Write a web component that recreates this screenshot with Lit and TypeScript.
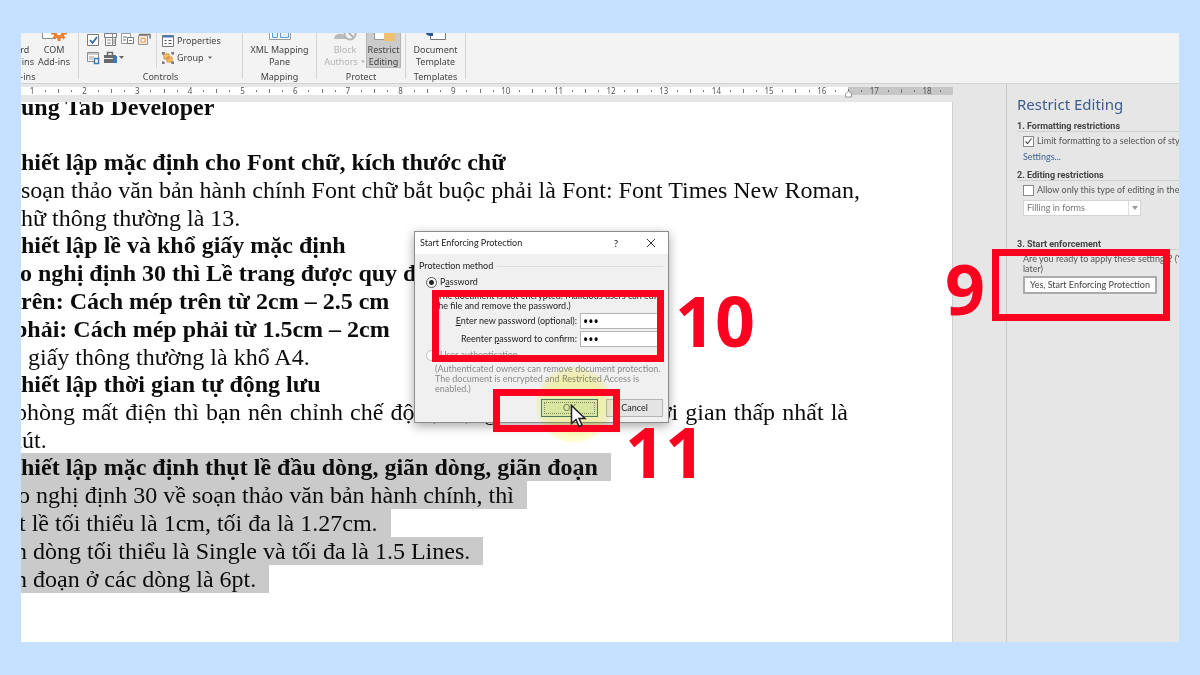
import { LitElement, html, css, svg, nothing } from "lit";
import { customElement } from "lit/decorators.js";
import { classMap } from "lit/directives/class-map.js";
import { styleMap } from "lit/directives/style-map.js";

interface Line {
  text: string;
  kind?: "heading" | "bold" | "justify";
  hang?: number;
  selected?: boolean;
}

const LINES: Line[] = [
  { text: "ung Tab Developer", kind: "bold" },
  { text: "" },
  { text: "hiết lập mặc định cho Font chữ, kích thước chữ", kind: "heading" },
  { text: "soạn thảo văn bản hành chính Font chữ bắt buộc phải là Font: Font Times New Roman,", kind: "justify" },
  { text: "hữ thông thường là 13." },
  { text: "hiết lập lề và khổ giấy mặc định", kind: "heading" },
  { text: "o nghị định 30 thì Lề trang được quy định", kind: "bold", hang: 1 },
  { text: "rên: Cách mép trên từ 2cm – 2.5 cm", kind: "bold" },
  { text: "phải: Cách mép phải từ 1.5cm – 2cm", kind: "bold", hang: 7 },
  { text: "ổ giấy thông thường là khổ A4.", hang: 11 },
  { text: "hiết lập thời gian tự động lưu", kind: "heading" },
  { text: "phòng mất điện thì bạn nên chỉnh chế độ tự động lưu Word với thời gian thấp nhất là", kind: "justify", hang: 6 },
  { text: "hút.", hang: 11 },
  { text: "hiết lập mặc định thụt lề đầu dòng, giãn dòng, giãn đoạn", kind: "heading", selected: true },
  { text: "o nghị định 30 về soạn thảo văn bản hành chính, thì", hang: 3, selected: true },
  { text: "t lề tối thiểu là 1cm, tối đa là 1.27cm.", hang: 2, selected: true },
  { text: "n dòng tối thiểu là Single và tối đa là 1.5 Lines.", hang: 6, selected: true },
  { text: "n đoạn ở các dòng là 6pt.", hang: 6, selected: true },
];

const base = css`
  * { box-sizing: border-box; }
  button, input, select { font: inherit; color: inherit; margin: 0; }
  button { padding: 0; border: 0; background: none; }
  svg { display: block; flex: none; }
`;

@customElement("word-ribbon")
class WordRibbon extends LitElement {
  static styles = [base, css`
    :host { display: flex; height: 51px; overflow: hidden; background: #f3f3f3; border-bottom: 1px solid #d2d2d2;
      font: 9px/12px "Noto Sans", "Open Sans", sans-serif; color: #444; white-space: nowrap; }
    .group { display: flex; flex-direction: column; justify-content: flex-end; flex: none; height: 46px;
      border-right: 1px solid #d4d4d4; }
    .label { line-height: 12px; margin-bottom: -4px; text-align: center; }
    .row { display: flex; justify-content: center; align-items: flex-end; height: 68px; margin-bottom: 3px; }
    .addins { width: 118px; margin-left: -60px; }
    .addins .row { justify-content: flex-end; padding-right: 6px; }
    .controls { width: 164px; }
    .controls .row { justify-content: flex-start; align-items: flex-end; padding-left: 8px; }
    .mapping { width: 74px; }
    .protect { width: 89px; }
    .protect .row { justify-content: flex-end; padding-right: 4px; }
    .templates { width: 60px; }
    .big { display: flex; flex-direction: column; align-items: center; width: 36px; }
    .big svg { margin-bottom: 2px; }
    .wide { width: 42px; }
    .restrict { width: 35px; background: #cbcbcb; box-shadow: inset 0 0 0 1px #b4b4b4; }
    .off { color: #b4b4b4; }
    .authors { display: flex; align-items: center; gap: 2px; }
    .big .authors svg { margin: 0; }
    .tools { display: grid; grid-template-columns: repeat(4, 17px); row-gap: 4px; width: 70px; padding-bottom: 3px;
      border-right: 1px solid #d9d9d9; }
    .tools button { height: 14px; }
    .side { display: flex; flex-direction: column; gap: 5px; padding: 0 0 4px 5px; }
    .side button { display: flex; align-items: center; gap: 3px; }
  `];

  caret(color = "#666") {
    return html`<svg width="6" height="4" viewBox="0 0 6 4"><path d="M1 .5h4L3 3z" fill=${color} /></svg>`;
  }

  render() {
    return html`
      <div class="group addins">
        <div class="row">
          <button class="big"><span>Word</span><span>Add-ins</span></button>
          <button class="big">
            <svg width="30" height="24" viewBox="0 0 30 24">
              <path d="M3.500 2.500h13v18h-13z" fill="#fff" stroke="#8a8a8a" />
              <path d="M6 8h8M6 12h8" stroke="#bbb" />
              <g fill="none" stroke="#ed8033">
                <circle cx="20" cy="15" r="4" stroke-width="3.500" />
                <path d="M20 8v3M20 20v3M12 15h3M25 15h3M14.500 9.500l2 2M23.500 18.500l2 2M25.500 9.500l-2 2M16.500 18.500l-2 2" stroke-width="3" />
              </g>
            </svg>
            <span>COM</span><span>Add-ins</span>
          </button>
        </div>
        <div class="label">Add-ins</div>
      </div>

      <div class="group controls">
        <div class="row">
          <div class="tools">
            <button aria-label="Check box content control"><svg width="14" height="14" viewBox="0 0 14 14">
              <path d="M.5 1.500h11v11H.5z" fill="#fff" stroke="#7a7a7a" /><path d="M3 7l2.500 3L10 4" fill="none" stroke="#2f6eb5" stroke-width="1.800" /></svg></button>
            <button aria-label="Combo box content control"><svg width="14" height="14" viewBox="0 0 14 14">
              <path d="M.5.5h12v4H.5zM1.500 4.500h10v8h-10z" fill="#fff" stroke="#7a7a7a" /><path d="M8.500 1v12M3 7h4M3 10h4M10 6v5" stroke="#8a8a8a" /></svg></button>
            <button aria-label="Drop-down list content control"><svg width="14" height="14" viewBox="0 0 14 14">
              <path d="M.5.5h9v10h-9z" fill="#fff" stroke="#999" /><path d="M6.500 4.500h6v6h-6zM2 4h4M2 7h3" fill="#fff" stroke="#777" /><path d="M8 7.500h3" stroke="#777" /></svg></button>
            <button aria-label="Date picker content control"><svg width="14" height="14" viewBox="0 0 14 14">
              <path d="M.5 2.500h9v9h-9z" fill="#f7e4d2" stroke="#999" /><path d="M3 5.500h4v3.500H3z" fill="#fff" stroke="#e0965a" /><path d="M1 1.500h11v4" fill="none" stroke="#777" stroke-width="1.500" /></svg></button>
            <button aria-label="Repeating section content control"><svg width="14" height="14" viewBox="0 0 14 14">
              <path d="M.5 1.500h11v9H.5z" fill="#fff" stroke="#8a8a8a" /><path d="M0 3h12M2 6h5M2 8h4" stroke="#999" /><path d="M7.500 7.500h4v5h-4z" fill="#fff" stroke="#3f78b8" stroke-width="1.500" /></svg></button>
            <button aria-label="Legacy tools"><svg width="22" height="14" viewBox="0 0 22 14">
              <path d="M0 4h12v8H0z" fill="#696969" /><path d="M3.500 4V1.500h5V4" fill="none" stroke="#696969" stroke-width="1.500" />
              <path d="M0 7.500h9" stroke="#eee" /><path d="M10 5h3v7h-3z" fill="#3f78b8" /><path d="M15 5h5l-2.500 3z" fill="#666" /></svg></button>
          </div>
          <div class="side">
            <button><svg width="12" height="12" viewBox="0 0 12 12">
              <path d="M.5.5h11v11H.5z" fill="#fff" stroke="#777" /><path d="M1 1.500h10" stroke="#3f78b8" stroke-width="2" /><path d="M2.500 5.500h2M2.500 8.500h2M6.500 5.500h3M6.500 8.500h3" stroke="#555" /></svg>Properties</button>
            <button><svg width="12" height="12" viewBox="0 0 12 12">
              <path d="M2 2h5v5H2zM5 5h5v5H5z" fill="#f2c078" stroke="#d99234" /><path d="M0 1h3M9 1h3M0 11h3M9 11h3M1 0v3M11 0v3M1 9v3M11 9v3" stroke="#555" /></svg>Group${this.caret()}</button>
          </div>
        </div>
        <div class="label">Controls</div>
      </div>

      <div class="group mapping">
        <div class="row">
          <button class="big"><svg width="24" height="24" viewBox="0 0 24 24">
            <path d="M1.500 3.500h21v18h-21z" fill="#fff" stroke="#999" /><path d="M4.500 14.500h5v5h-5zM12.500 14.500h8v5h-8zM8.500 7.500h6v4h-6z" fill="#e4effa" stroke="#5b9bd5" /></svg>
            <span>XML Mapping</span><span>Pane</span></button>
        </div>
        <div class="label">Mapping</div>
      </div>

      <div class="group protect">
        <div class="row">
          <button class="big wide off"><svg width="26" height="24" viewBox="0 0 26 24">
            <circle cx="8" cy="11" r="4" fill="#bbb" /><path d="M2 21c0-7 12-7 12 0z" fill="#bbb" />
            <circle cx="18" cy="16" r="5.500" fill="#f3f3f3" stroke="#b4b4b4" stroke-width="2" /><path d="M14 12l8 8" stroke="#b4b4b4" stroke-width="2" /></svg>
            <span>Block</span><span class="authors">Authors${this.caret("#b4b4b4")}</span></button>
          <button class="big restrict"><svg width="24" height="24" viewBox="0 0 24 24">
            <path d="M2.500 1.500h14v20h-14z" fill="#fff" stroke="#999" /><path d="M12 14h11v9H12z" fill="#f0c071" /><path d="M14.500 14v-3a3 3 0 0 1 6 0v3" fill="none" stroke="#777" stroke-width="1.500" /></svg>
            <span>Restrict</span><span>Editing</span></button>
        </div>
        <div class="label">Protect</div>
      </div>

      <div class="group templates">
        <div class="row">
          <button class="big wide"><svg width="24" height="24" viewBox="0 0 24 24">
            <path d="M6.500 2.500h15v19h-15z" fill="#fff" stroke="#777" /><path d="M2 8h12v10H7c-3 0-5-1-5-3z" fill="#2b579a" /><path d="M9 14h9v4H9z" fill="#fff" /></svg>
            <span>Document</span><span>Template</span></button>
        </div>
        <div class="label">Templates</div>
      </div>
    `;
  }
}

@customElement("word-document")
class WordDocument extends LitElement {
  static styles = [base, css`
    :host { display: flex; flex-direction: column; gap: 7px; padding: 3px 53px 0 0; min-width: 0; overflow: hidden; }
    .ruler { width: 100%; height: 8px; overflow: visible; background: #c6c6c6; flex: none;
      font: 8px "Noto Sans", sans-serif; fill: #555; }
    .page { flex: 1; min-height: 0; overflow: hidden; background: #fff; border-right: 1px solid #d0d0d0; }
    .text { width: 827px; margin-top: -9px; font: 24px/28px "Liberation Serif", serif; color: #0c0c0c; white-space: nowrap; }
    .line { height: 28px; }
    .bold, .heading { font-weight: 700; }
    .heading { height: 27px; line-height: 27px; }
    .justify { text-align: justify; text-align-last: justify; }
    .selected { width: fit-content; padding-right: 13px; background: #cacaca; }
    .selected.heading { height: 28px; margin-top: -1px; line-height: 28px; }
  `];

  ruler() {
    const cm = 895 / 17;
    const marks = [];
    for (let i = 0; i < 18; i++) {
      const x = 11 + cm * i;
      marks.push(svg`<text x=${x} y="7" text-anchor="middle">${i + 1}</text>`);
      for (let q = 1; q < 4 && !(i === 17 && q > 1); q++) {
        const h = q === 2 ? 4 : 2;
        marks.push(svg`<rect x=${Math.round(x + (cm * q) / 4)} y=${4 - h / 2} width="1" height=${h} fill="#777" />`);
      }
    }
    return html`<svg class="ruler" aria-label="Ruler">
      <rect width="827" height="8" fill="#fff" />
      ${marks}
      <path d="M827.500 4l3 3v3h-6V7z" fill="#fff" stroke="#999" />
    </svg>`;
  }

  render() {
    return html`${this.ruler()}
      <div class="page">
        <div class="text">
          ${LINES.map((l) => html`<div
            class=${classMap({ line: true, [l.kind ?? "plain"]: true, selected: !!l.selected })}
            style=${l.hang ? styleMap({ marginLeft: `-${l.hang}px` }) : nothing}>${l.text}</div>`)}
        </div>
      </div>`;
  }
}

@customElement("restrict-pane")
class RestrictPane extends LitElement {
  static styles = [base, css`
    :host { display: block; width: 173px; padding: 9px 0 0 10px; overflow: hidden; border-left: 1px solid #c8c8c8;
      font: 9px/10px Lato, "Open Sans", sans-serif; color: #555; white-space: nowrap; }
    h1 { margin: 0; font-family: "Noto Sans", sans-serif; font-size: 15px; line-height: 22px; font-weight: 400; color: #3f5b8c; }
    h2 { margin: 0; height: 12px; font-family: Roboto, sans-serif; font-size: 9px; line-height: 12px; font-weight: 700; color: #444; border-bottom: 1px solid #d0d0d0; }
    section { margin-top: 5px; padding-bottom: 2px; }
    .body { padding: 3px 0 0 6px; }
    .check { display: flex; align-items: center; gap: 3px; height: 12px; }
    .check input { appearance: none; width: 11px; height: 11px; flex: none; border: 1px solid #8a8a8a; background: #fff; }
    .check input:checked { background: #fff url("data:image/svg+xml,%3Csvg xmlns='http://www.w3.org/2000/svg' viewBox='0 0 9 9'%3E%3Cpath d='M1.500 4.500l2 2 4-5' fill='none' stroke='%23555' stroke-width='1.200'/%3E%3C/svg%3E"); }
    a { display: block; margin-top: 5px; color: #3f5f95; text-decoration: none; }
    .pick { position: relative; width: 118px; margin-top: 4px; }
    select { display: block; appearance: none; width: 100%; height: 16px; padding: 0 3px; border: 1px solid #d4d4d4; border-radius: 0; background: #fff; color: #777; opacity: 1; }
    .arrow { position: absolute; right: 0; top: 0; pointer-events: none; }
    .enforce { margin-top: 20px; }
    .enforce .body { padding-top: 4px; }
    .go { display: block; width: 134px; height: 18px; margin-top: 2px; border: 2px solid #ababab; background: #fdfdfd; color: #444; }
  `];

  render() {
    return html`
      <h1>Restrict Editing</h1>
      <section>
        <h2>1. Formatting restrictions</h2>
        <div class="body">
          <label class="check"><input type="checkbox" checked />Limit formatting to a selection of styles</label>
          <a href="#settings">Settings...</a>
        </div>
      </section>
      <section class="editing">
        <h2>2. Editing restrictions</h2>
        <div class="body">
          <label class="check"><input type="checkbox" />Allow only this type of editing in the document:</label>
          <div class="pick">
            <select disabled aria-label="Type of editing"><option>Filling in forms</option></select>
            <svg class="arrow" width="13" height="16"><path d="M.5 1v14" stroke="#ddd" /><path d="M4 6h6l-3 4z" fill="#999" /></svg>
          </div>
        </div>
      </section>
      <section class="enforce">
        <h2>3. Start enforcement</h2>
        <div class="body">
          <div>Are you ready to apply these settings? (You can</div>
          <div>later)</div>
          <button class="go">Yes, Start Enforcing Protection</button>
        </div>
      </section>`;
  }
}

@customElement("enforce-dialog")
class EnforceDialog extends LitElement {
  static styles = [base, css`
    :host { display: block; width: 255px; background: #f0f0f0; border: 1px solid #8c8c8c;
      box-shadow: 0 3px 10px rgba(0, 0, 0, .35); font: 9px/10px Lato, "Open Sans", sans-serif; color: #222; white-space: nowrap; }
    header { display: flex; align-items: center; height: 22px; padding: 0 12px 0 5px; background: #fff; }
    header span { flex: 1; }
    .help { width: 12px; margin-right: 24px; font-size: 10px; }
    form { padding: 7px 5px 5px 4px; }
    fieldset { margin: 0; padding: 0; border: 0; min-width: 0; }
    legend { display: flex; align-items: center; gap: 4px; width: 100%; height: 10px; padding: 0; }
    legend::after { content: ""; flex: 1; border-top: 1px solid #dcdcdc; }
    .radio { display: flex; align-items: center; gap: 3px; height: 12px; margin: 5px 0 0 7px; }
    .radio input { appearance: none; width: 11px; height: 11px; border: 1px solid #555; border-radius: 50%; background: #fff; }
    .radio input:checked { background: radial-gradient(circle, #222 0 2px, #fff 3px); }
    .off { color: #8a8a8a; }
    .off input { border-color: #bbb; }
    .radio.off { margin-top: 2px; }
    .note { margin: 3px 0 0 16px; }
    .fields { display: grid; grid-template-columns: 1fr 83px; gap: 2px 3px; margin-top: 2px; align-items: center; text-align: right; }
    .fields input { width: 100%; height: 16px; padding: 0 2px; border: 1px solid #b4b4b4; background: #fff; font: 14px/14px "Noto Sans", sans-serif; color: #000; }
    footer { display: flex; justify-content: flex-end; gap: 8px; margin-top: 5px; }
    footer button { width: 57px; height: 18px; background: #e4e4e4; border: 1px solid #b4b4b4; }
    footer .ok { border: 1px solid #4a7a78; outline: 1px dotted #888; outline-offset: -4px; background: #d9e8dc; color: #777; }
  `];

  render() {
    return html`
      <header>
        <span>Start Enforcing Protection</span>
        <button class="help" aria-label="Help">?</button>
        <button aria-label="Close"><svg width="10" height="10"><path d="M1 1l8 8M9 1l-8 8" stroke="#333" /></svg></button>
      </header>
      <form>
        <fieldset>
          <legend>Protection method</legend>
          <label class="radio"><input type="radio" name="m" checked /><span>P<u>a</u>ssword</span></label>
          <div class="note">(The document is not encrypted. Malicious users can edit<br />the file and remove the password.)</div>
          <div class="fields">
            <label for="p1"><u>E</u>nter new password (optional):</label><input id="p1" type="password" value="123" />
            <label for="p2">Reenter <u>p</u>assword to confirm:</label><input id="p2" type="password" value="123" />
          </div>
          <label class="radio off"><input type="radio" name="m" disabled /><span><u>U</u>ser authentication</span></label>
          <div class="note off">(Authenticated owners can remove document protection.<br />The document is encrypted and Restricted Access is<br />enabled.)</div>
        </fieldset>
        <footer><button type="button" class="ok">OK</button><button type="button">Cancel</button></footer>
      </form>`;
  }
}

@customElement("app-root")
class AppRoot extends LitElement {
  static styles = [base, css`
    :host { display: block; height: 100vh; padding: 33px 21px; box-sizing: border-box; background: #c6e0ff; }
    .window { position: relative; display: flex; flex-direction: column; height: 100%; overflow: hidden; background: #e6e6e6; }
    .work { display: flex; flex: 1; min-height: 0; }
    word-document { flex: 1; }
    enforce-dialog, .box, .num, .halo, .cursor { position: absolute; }
    enforce-dialog { left: 393px; top: 198px; }
    .box { border: 7px solid #fb0220; }
    .num { font: 700 70px/70px "Open Sans", "Noto Sans", sans-serif; color: #fb0220; }
    .halo { left: 515px; top: 334px; width: 76px; height: 76px; border-radius: 50%; background: radial-gradient(circle closest-side, #fdfdba 75%, #fefee0 100%); mix-blend-mode: multiply; }
    .cursor { left: 549px; top: 371px; }
    .b9 { left: 971px; top: 216px; width: 178px; height: 72px; }
    .b10 { left: 411px; top: 257px; width: 232px; height: 72px; }
    .b11 { left: 472px; top: 356px; width: 127px; height: 43px; }
    .n9 { left: 924px; top: 220px; }
    .n10 { left: 654px; top: 252px; }
    .n11 { left: 604px; top: 383px; }
  `];

  render() {
    return html`<main class="window">
      <word-ribbon></word-ribbon>
      <div class="work"><word-document></word-document><restrict-pane></restrict-pane></div>
      <enforce-dialog></enforce-dialog>
      <div class="halo"></div>
      <div class="box b9"></div><div class="num n9">9</div>
      <div class="box b10"></div><div class="num n10">10</div>
      <div class="box b11"></div><div class="num n11">11</div>
      <svg class="cursor" width="17" height="24" viewBox="0 0 17 24"><path d="M1.500 1.500v18l4.500-4 3 7 3-1.500-3-6.500h6z" fill="#fff" stroke="#222" stroke-width="1.500" /></svg>
    </main>`;
  }
}
